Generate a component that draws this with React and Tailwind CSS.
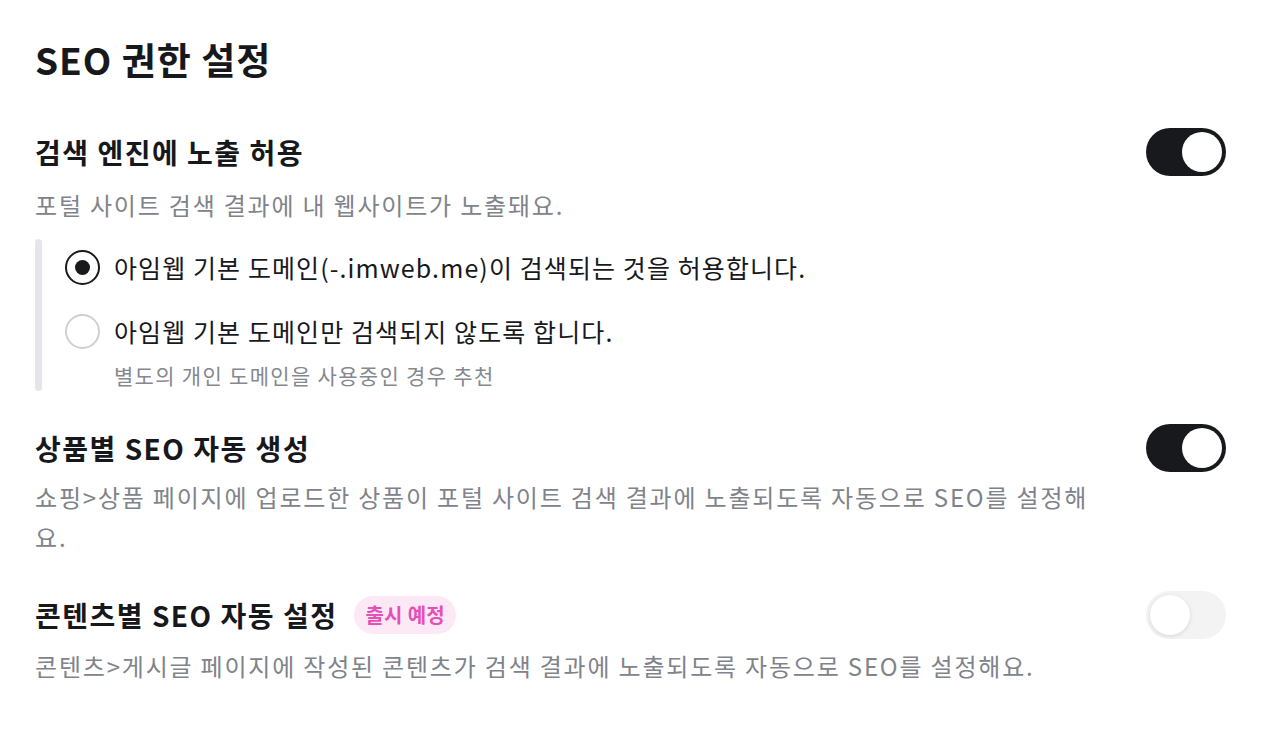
import React from "react";

const font = { fontFamily: '"Noto Sans CJK KR", "Noto Sans", sans-serif' };

function Toggle({ on }) {
  if (on) {
    return (
      <div className="flex h-[48px] w-[80px] shrink-0 items-center justify-end rounded-full bg-[#18191d] p-[4px]">
        <div className="h-[40px] w-[40px] rounded-full bg-white" />
      </div>
    );
  }
  return (
    <div className="flex h-[48px] w-[80px] shrink-0 items-center justify-start rounded-full bg-[#f3f3f4] p-[4px]">
      <div className="h-[40px] w-[40px] rounded-full bg-white shadow-[0_1px_4px_rgba(0,0,0,0.12)]" />
    </div>
  );
}

function Radio({ checked, children }) {
  return (
    <div className="flex h-[40px] items-center">
      {checked ? (
        <div className="flex h-[35px] w-[35px] shrink-0 items-center justify-center rounded-full border-[2px] border-[#18191d]">
          <div className="h-[15px] w-[15px] rounded-full bg-[#18191d]" />
        </div>
      ) : (
        <div className="h-[35px] w-[35px] shrink-0 rounded-full border-[2px] border-[#cfd0d3]" />
      )}
      <span className="ml-[14px] text-[25px] leading-[40px] tracking-[1.1px] text-[#18191d]">{children}</span>
    </div>
  );
}

export default function App() {
  return (
    <div style={font} className="h-[734px] w-[1268px] bg-white px-[35px] pt-[35px]">
      <h1 className="text-[37px] font-bold leading-[48px] tracking-[1px] text-[#17181c]">SEO 권한 설정</h1>

      <div className="mt-[45px] flex h-[48px] items-center justify-between pr-[7px]">
        <h2 className="text-[28px] font-bold leading-[40px] tracking-[1.5px] text-[#17181c]">검색 엔진에 노출 허용</h2>
        <Toggle on />
      </div>
      <p className="mt-[9px] text-[24px] leading-[40px] tracking-[1.8px] text-[#80838a]">포털 사이트 검색 결과에 내 웹사이트가 노출돼요.</p>

      <div className="mt-[14px] flex">
        <div className="w-[7px] rounded-full bg-[#e5e6e9]" />
        <div className="pb-[1px] pl-[23px] pt-[8px]">
          <Radio checked>아임웹 기본 도메인(-.imweb.me)이 검색되는 것을 허용합니다.</Radio>
          <div className="mt-[24px]">
            <Radio>아임웹 기본 도메인만 검색되지 않도록 합니다.</Radio>
          </div>
          <p className="ml-[49px] mt-[9px] text-[21px] leading-[30px] tracking-[1.3px] text-[#85888f]">별도의 개인 도메인을 사용중인 경우 추천</p>
        </div>
      </div>

      <div className="mt-[33px] flex h-[48px] items-center justify-between pr-[7px]">
        <h2 className="text-[28px] font-bold leading-[40px] tracking-[1.5px] text-[#17181c]">상품별 SEO 자동 생성</h2>
        <Toggle on />
      </div>
      <p className="mt-[5px] max-w-[1075px] text-[24px] leading-[40px] tracking-[1.8px] text-[#80838a]">
        쇼핑&gt;상품 페이지에 업로드한 상품이 포털 사이트 검색 결과에 노출되도록 자동으로 SEO를 설정해요.
      </p>

      <div className="mt-[34px] flex h-[48px] items-center justify-between pr-[7px]">
        <div className="flex items-center">
          <h2 className="text-[28px] font-bold leading-[40px] tracking-[1.5px] text-[#17181c]">콘텐츠별 SEO 자동 설정</h2>
          <span className="ml-[17px] flex h-[38px] items-center rounded-full bg-[#fde9f6] px-[11px] text-[20px] font-semibold tracking-[0.3px] text-[#e64fb7]">
            출시 예정
          </span>
        </div>
        <Toggle />
      </div>
      <p className="mt-[7px] text-[24px] leading-[40px] tracking-[1.8px] text-[#80838a]">
        콘텐츠&gt;게시글 페이지에 작성된 콘텐츠가 검색 결과에 노출되도록 자동으로 SEO를 설정해요.
      </p>
    </div>
  );
}
